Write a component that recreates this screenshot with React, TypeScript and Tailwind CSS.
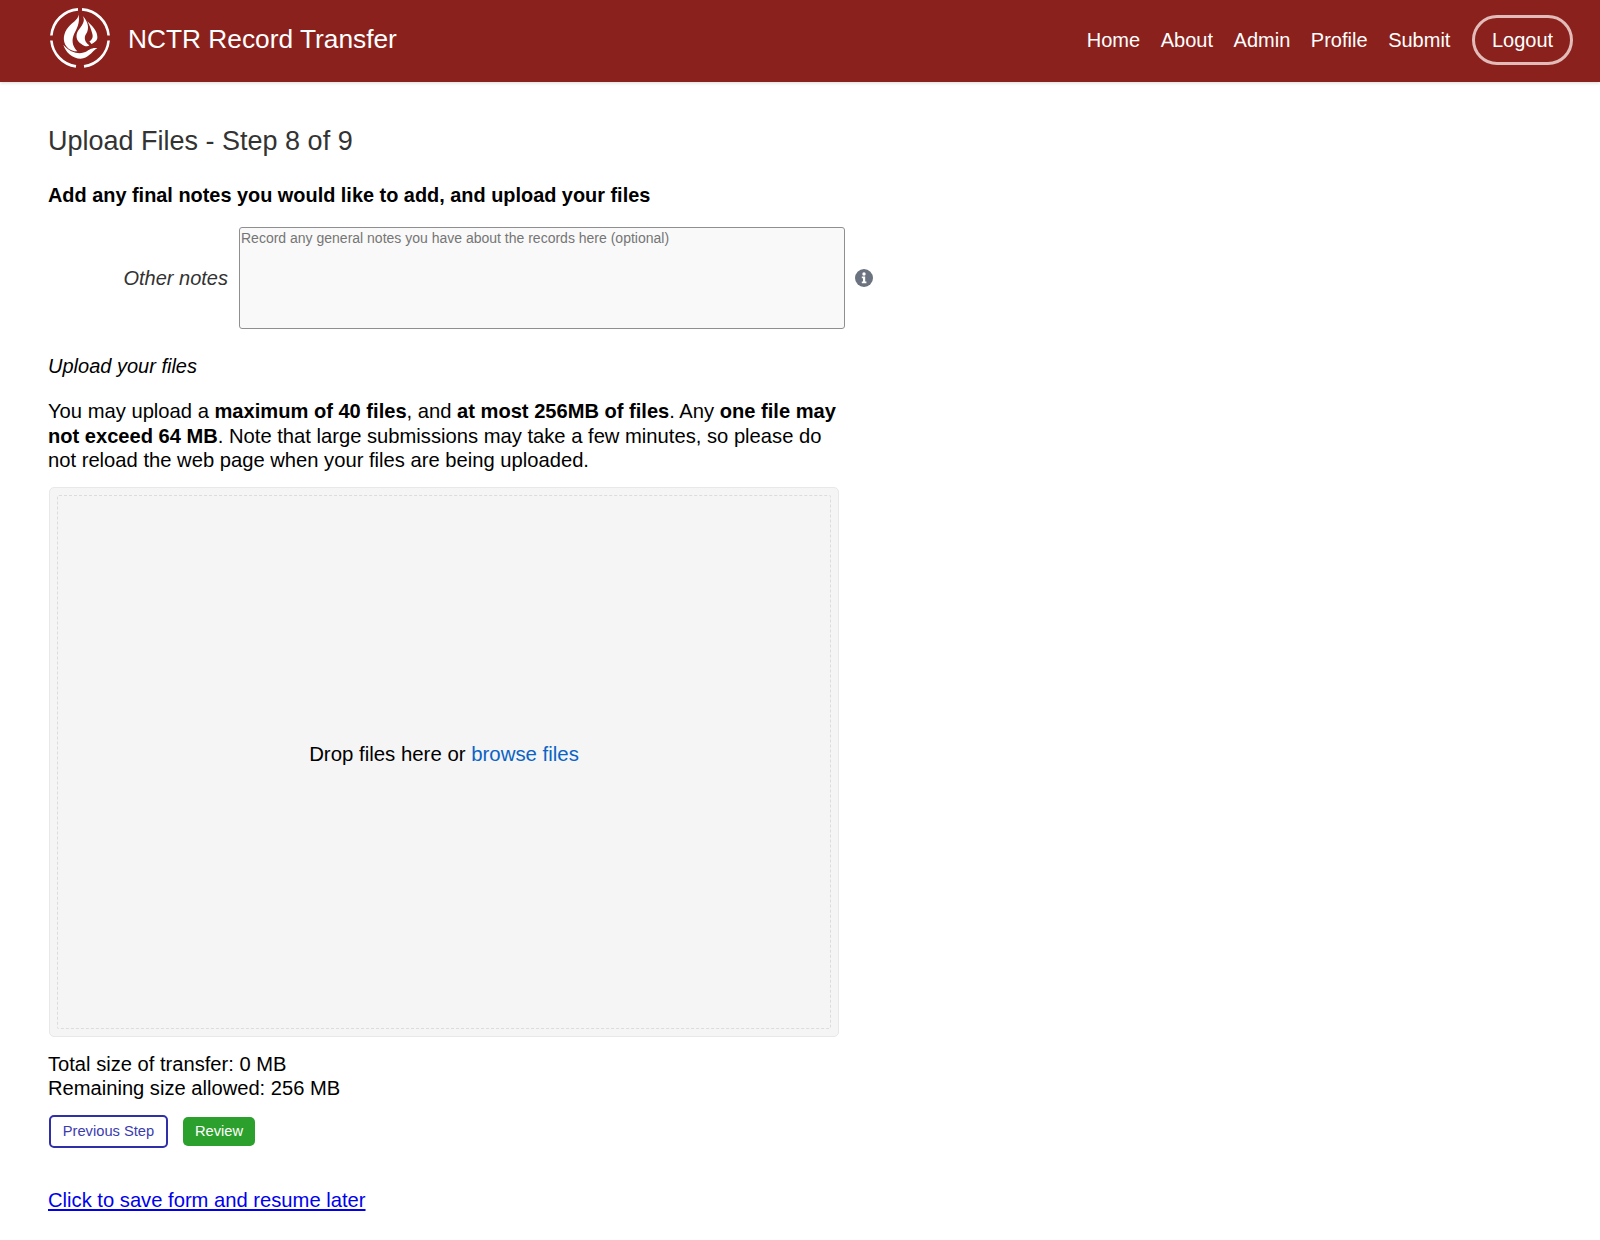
const navLinks = ["Home", "About", "Admin", "Profile", "Submit"];

function Logo() {
  return (
    <svg width="62" height="62" viewBox="0 0 62 62" fill="none" className="mb-[4px] ml-px">
      <g stroke="#fff" strokeWidth="2.6">
        <path d="M2.4 28.5 A28.7 28.7 0 0 1 29 2.4" />
        <path d="M33 2.4 A28.7 28.7 0 0 1 59.6 28.5" />
        <path d="M59.6 33.5 A28.7 28.7 0 0 1 35 59.4" />
        <path d="M27 59.4 A28.7 28.7 0 0 1 2.4 33.5" />
      </g>
      <g fill="#fff" transform="translate(-8.3 -6.3) scale(0.3333)">
        <path d="M112 34 C120 54 96 64 84 78 C68 96 64 120 78 138 C86 148 98 152 110 152 C98 140 92 124 98 106 C104 88 122 70 112 34 Z" />
        <path d="M126 46 C136 62 122 76 112 90 C104 104 106 120 122 130 C130 136 140 140 146 134 C134 126 128 112 136 100 C146 86 144 64 126 46 Z" />
        <path d="M140 62 C154 76 170 90 170 110 C170 120 162 126 152 130 L146 122 C156 116 158 108 154 96 C150 84 148 76 140 62 Z" />
        <path d="M68 132 C74 154 96 174 120 174 C142 174 152 154 170 142 C152 140 144 148 134 154 C116 162 88 156 68 132 Z" />
      </g>
    </svg>
  );
}

function InfoIcon() {
  return (
    <svg width="18" height="18" viewBox="0 0 18 18">
      <circle cx="9" cy="9" r="9" fill="#6b7280" />
      <circle cx="9" cy="5" r="1.7" fill="#fff" />
      <path d="M6.8 7.6h3.4v5h1.2v1.6H6.8v-1.6H8v-3.4H6.8z" fill="#fff" />
    </svg>
  );
}

export default function App() {
  return (
    <div className="min-h-[1240px] bg-white text-black font-['Liberation_Sans',Arial,sans-serif]">
      <header className="h-[82px] bg-[#8a211c] pl-12 pr-[27px] pb-[3px] flex items-center justify-between shadow-[0_1px_3px_rgba(0,0,0,0.15)]">
        <div className="flex items-center">
          <Logo />
          <span className="ml-[17px] text-[26.3px] text-white">NCTR Record Transfer</span>
        </div>
        <nav className="flex items-center text-[20px] text-white">
          {navLinks.map((item) => (
            <a key={item} href="#" className="mr-[20.6px]">
              {item}
            </a>
          ))}
          <a href="#" className="ml-[1px] h-[50px] w-[101px] flex items-center justify-center rounded-full border-[3px] border-[#e3bcb9]">
            Logout
          </a>
        </nav>
      </header>

      <main className="px-12 pt-[42px] w-[960px]">
        <h1 className="text-[27px] leading-[34px] text-[#333333]">Upload Files - Step 8 of 9</h1>
        <h2 className="mt-[23px] text-[19.9px] leading-[28px] font-bold">Add any final notes you would like to add, and upload your files</h2>

        <div className="mt-[18px] flex items-center">
          <label className="w-[180px] shrink-0 text-right text-[20px] italic text-[#333333]">Other notes</label>
          <textarea
            className="ml-[11px] w-[606px] shrink-0 h-[102px] resize-none rounded-[3px] border border-[#8f8f8f] bg-[#f9f9f9] px-[1px] py-[1px] text-[14px] leading-[18px] placeholder:text-[#757575]"
            placeholder="Record any general notes you have about the records here (optional)"
          />
          <span className="ml-[10px]">
            <InfoIcon />
          </span>
        </div>

        <p className="mt-[23px] text-[20px] leading-[28px] italic">Upload your files</p>

        <p className="mt-[19px] w-[795px] text-[20.2px] leading-[24.5px]">
          You may upload a <b className="text-[20.1px]">maximum of 40 files</b>, and <b className="text-[20.1px]">at most 256MB of files</b>. Any <b className="text-[20.1px]">one file may not exceed 64 MB</b>. Note that large submissions may take a few minutes, so please do not reload the web page when your files are being uploaded.
        </p>

        <div className="mt-[14px] ml-[1px] w-[790px] h-[550px] rounded-[5px] border border-[#e8e8e8] bg-[#f5f5f5] p-[7px]">
          <div className="h-full rounded-[2px] border border-dashed border-[#dcdcdc] pb-[14px] flex items-center justify-center text-[20.4px]">
            <span>
              Drop files here or <a href="#" className="text-[#0b63c4]">browse files</a>
            </span>
          </div>
        </div>

        <p className="mt-[15px] text-[20.15px] leading-[24.5px]">
          Total size of transfer: 0 MB
          <br />
          Remaining size allowed: 256 MB
        </p>

        <div className="mt-[14px] ml-[1px] flex items-center">
          <button className="h-[33px] w-[119px] rounded-[5px] border-2 border-[#2f2fa8] bg-white text-[14.7px] text-[#3b3bb0]">Previous Step</button>
          <button className="ml-[15px] h-[29px] w-[72px] rounded-[5px] bg-[#2ca02c] text-[14.7px] text-white">Review</button>
        </div>

        <a href="#" className="mt-[38px] inline-block text-[20.2px] leading-[28px] text-[#0000ee] underline">Click to save form and resume later</a>
      </main>
    </div>
  );
}
